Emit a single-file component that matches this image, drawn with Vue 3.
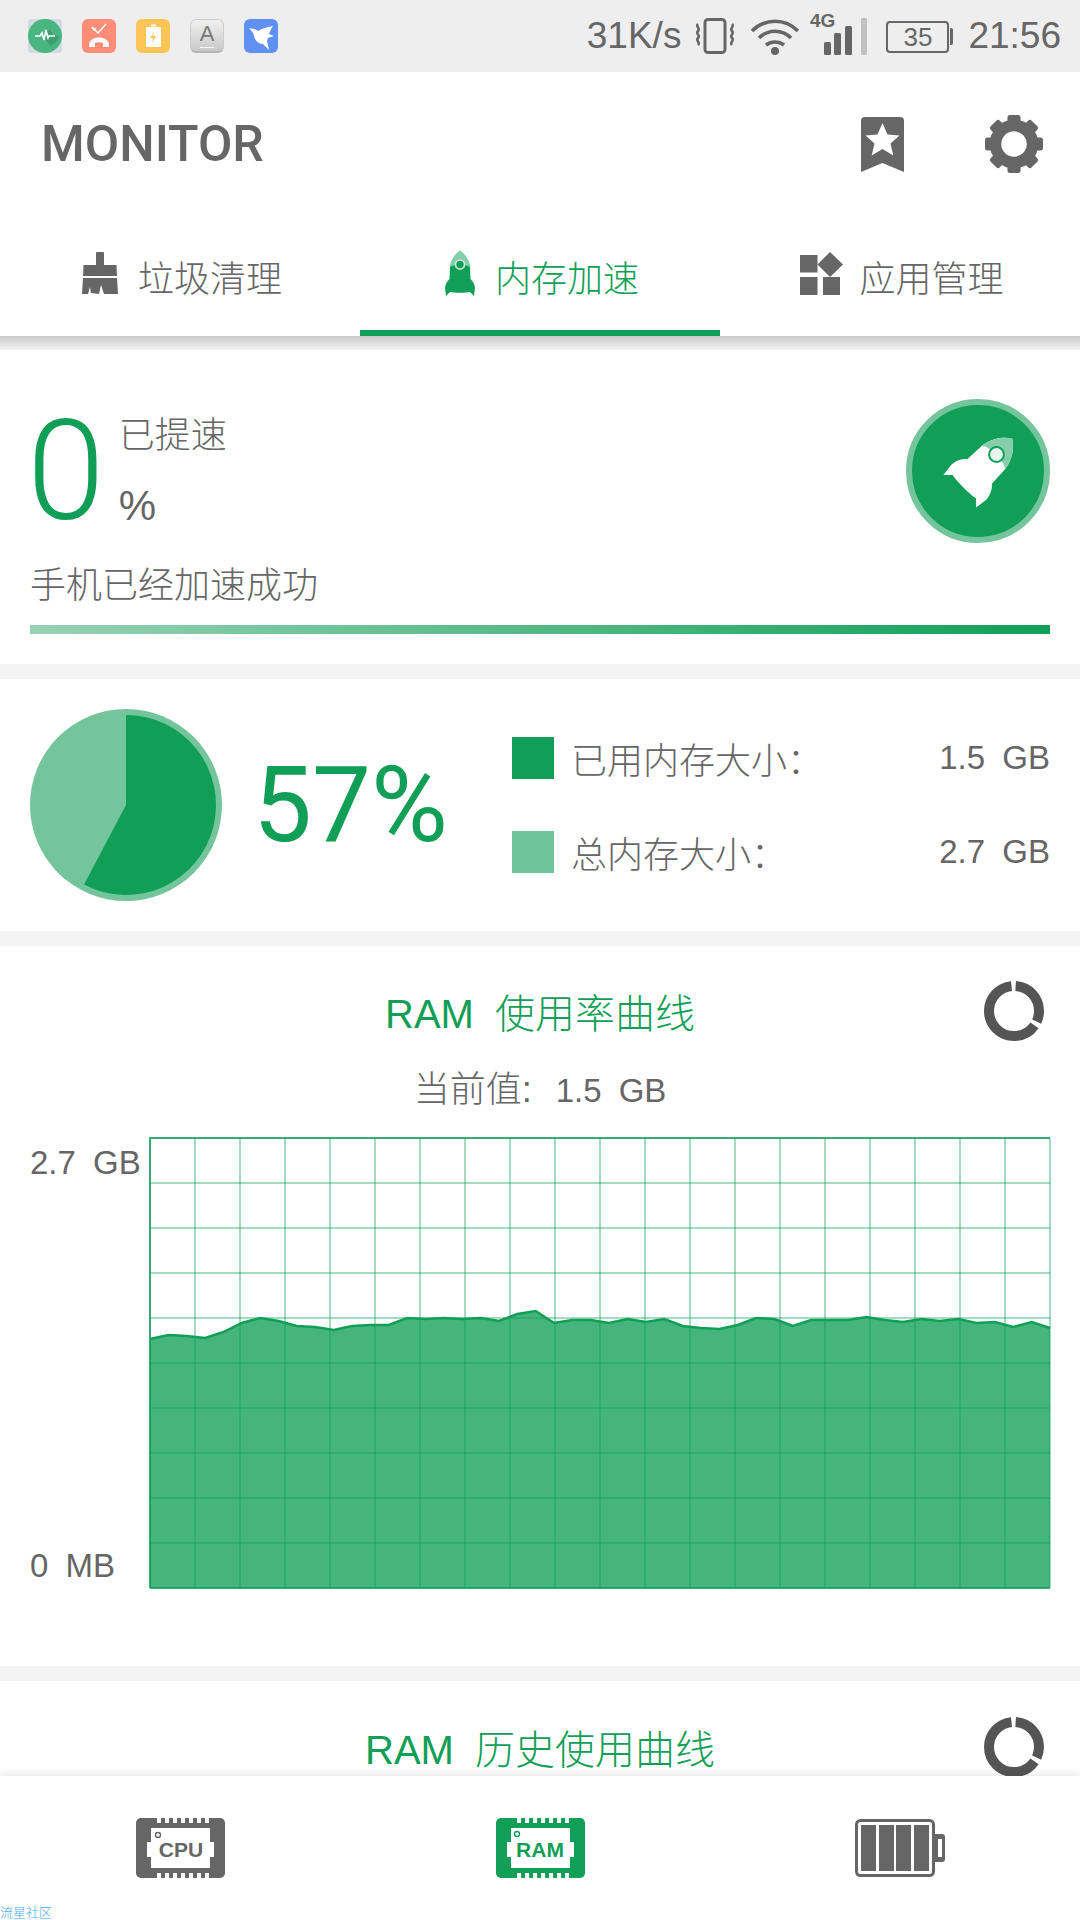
<script setup>
// Curva de uso de RAM: valores y (px dentro de la gráfica), uno cada 18.37 px
const ramCurve = [
  202, 198, 199, 201, 195, 186, 181, 184, 189, 190, 193, 189, 188, 188, 181, 182, 181,
  182, 181, 184, 177, 174, 186, 183, 183, 186, 182, 185, 182, 189, 191, 192, 188, 181,
  182, 189, 183, 183, 183, 180, 183, 185, 182, 184, 182, 186, 185, 190, 185, 191,
]

const linePoints = ramCurve.map((y, i) => `${(1 + (i * 900) / 49).toFixed(1)},${y}`).join(' ')
const areaPoints = `1,451 ${linePoints} 901,451`

const gridX = Array.from({ length: 21 }, (_, i) => 1 + i * 45)
const gridY = Array.from({ length: 11 }, (_, i) => 1 + i * 45)

const gearTeeth = [0, 45, 90, 135, 180, 225, 270, 315]
const chipPins = [0, 1, 2, 3, 4, 5, 6]
const batteryCells = [6, 24, 41, 59]

// Cohete compartido por la pestaña y el botón
const rocketBody =
  'M15 0C20 3 24 9 25 16L25.5 28C28 30 29.5 33 30 37L29 45L25 41C22 42 8 42 5 41L1 45L0 37C.5 33 2 30 4.5 28L5 16C6 9 10 3 15 0Z'
const rocketNose = 'M15 0C20 3 24 9 25 16C20 12.5 10 12.5 5 16C6 9 10 3 15 0Z'

const tabs = [
  { key: 'clean', label: '垃圾清理' },
  { key: 'boost', label: '内存加速', active: true },
  { key: 'apps', label: '应用管理' },
]
</script>

<template>
  <div class="screen">
    <!-- Barra de estado -->
    <div class="status-bar">
      <div class="notifications">
        <svg class="notif" viewBox="0 0 34 34">
          <rect width="34" height="34" rx="4" fill="#d5dae0" />
          <circle cx="17" cy="17" r="17" fill="#49b581" />
          <path d="M14 17l9 10 6-5 2-5-6-1-3-6z" fill="#3f9e70" />
          <path d="M7 17h5l2-3 2 7 2-10 2 8 1-2h6" fill="none" stroke="#fff" stroke-width="1.6" />
        </svg>
        <svg class="notif" viewBox="0 0 34 34">
          <rect width="34" height="34" rx="6" fill="#fe8d78" />
          <path d="M10 8l2 3 2-2M10 8l6 6 8-9" fill="none" stroke="#fff" stroke-width="1.4" />
          <path d="M7 26c0-10 20-10 20 0v2h-6v-4c-2-1-6-1-8 0v4H7z" fill="#fff" />
        </svg>
        <svg class="notif" viewBox="0 0 34 34">
          <rect width="34" height="34" rx="6" fill="#fdc557" />
          <rect x="10" y="8" width="15" height="20" rx="1" fill="#fff" />
          <rect x="15" y="5.5" width="5" height="2" fill="#fff" />
          <path d="M18 13l-4 6h3l-1 5 4-7h-3z" fill="#fdc557" />
        </svg>
        <div class="notif notif-keyboard"><span>A</span></div>
        <svg class="notif" viewBox="0 0 34 34">
          <rect width="34" height="34" rx="6" fill="#5e91f2" />
          <path d="M5 9c4 1 7 1 9 3 3-2 8-4 15-5-2 3-3 5-4 8l5 2-6 2-1 3 2 9-6-6c-4 0-8-3-9-8 0-3-3-5-5-8z" fill="#fff" />
        </svg>
      </div>
      <div class="indicators">
        <span class="speed">31K/s</span>
        <svg class="ic-vibrate" width="40" height="36" viewBox="0 0 40 36">
          <rect x="10" y="1.5" width="20" height="33" rx="3" fill="none" stroke="#666" stroke-width="3" />
          <path d="M3 6c-3 3 3 4 0 7s3 4 0 7 3 4 0 7M37 6c3 3-3 4 0 7s-3 4 0 7-3 4 0 7" fill="none" stroke="#666" stroke-width="2.6" />
        </svg>
        <svg class="ic-wifi" width="50" height="37" viewBox="0 0 50 37">
          <path d="M2 13C15 0 35 0 48 13M9 20C18 11 32 11 41 20M16 27c5-4 13-4 18 0" fill="none" stroke="#666" stroke-width="3.6" />
          <circle cx="25" cy="33" r="4" fill="#666" />
        </svg>
        <svg class="ic-signal" width="58" height="42" viewBox="0 0 58 42">
          <text x="0" y="14" class="net-label">4G</text>
          <rect x="14" y="29" width="7" height="13" rx="1.5" fill="#666" />
          <rect x="24" y="20" width="7" height="22" rx="1.5" fill="#666" />
          <rect x="39" y="13" width="0" height="0" />
          <rect x="35" y="13" width="7" height="29" rx="1.5" fill="#666" />
          <rect x="51" y="5" width="6" height="37" rx="1.5" fill="#c2c2c2" />
        </svg>
        <div class="battery"><span>35</span></div>
        <span class="clock">21:56</span>
      </div>
    </div>

    <!-- Cabecera -->
    <header class="app-header">
      <div class="logo">MONITOR</div>
      <div class="header-actions">
        <svg width="43" height="55" viewBox="0 0 43 55">
          <path d="M4 0h35a4 4 0 0 1 4 4v51L21.500 46 0 55V4a4 4 0 0 1 4-4z" fill="#666" />
          <path d="M21.500 6l5 11.500 12 1-9 8 2.800 12-10.800-6.500-10.800 6.500 2.800-12-9-8 12-1z" fill="#fff" />
        </svg>
        <svg width="58" height="58" viewBox="0 0 58 58">
          <g fill="#666">
            <rect v-for="a in gearTeeth" :key="a" x="22.500" y="0" width="13" height="14" rx="2.500" :transform="`rotate(${a} 29 29)`" />
          </g>
          <circle cx="29" cy="29" r="18.500" fill="none" stroke="#666" stroke-width="11.500" />
        </svg>
      </div>
    </header>

    <!-- Pestañas -->
    <nav class="tabs">
      <div v-for="tab in tabs" :key="tab.key" class="tab" :class="[tab.key, { active: tab.active }]">
        <svg v-if="tab.key === 'clean'" width="36" height="42" viewBox="0 0 36 42">
          <path d="M14 2a4 4 0 0 1 8 0v11h12.500l.5 11H1l.5-11H14z" fill="#666" />
          <path d="M1 26h34l1 16H22l-3-9-2 9-8-1-1-6-2 7H0z" fill="#666" />
        </svg>
        <svg v-else-if="tab.key === 'boost'" width="30" height="45" viewBox="0 0 30 45">
          <path :d="rocketBody" fill="#119f58" />
          <path :d="rocketNose" fill="#86ceaa" />
          <circle cx="15" cy="13.500" r="4.500" fill="#119f58" stroke="#d2ecdf" stroke-width="1.600" />
        </svg>
        <svg v-else width="43" height="43" viewBox="0 0 43 43">
          <g fill="#666">
            <rect x="0" y="3" width="17.500" height="17.500" />
            <path d="M30 0l13 12.500L30 25 17.500 12.500z" />
            <rect x="0" y="25" width="17.500" height="18" />
            <rect x="23" y="25" width="17" height="18" />
          </g>
        </svg>
        <span>{{ tab.label }}</span>
      </div>
    </nav>

    <main class="content">
      <div class="tabs-shadow"></div>

      <!-- Aceleración -->
      <section class="card boost-card">
        <div class="boost-top">
          <div class="boost-value">
            <span class="boost-number">0</span>
            <div class="boost-side">
              <span>已提速</span>
              <span class="boost-percent">%</span>
            </div>
          </div>
          <svg class="boost-button" width="144" height="144" viewBox="0 0 144 144">
            <circle cx="72" cy="72" r="69" fill="#119f58" stroke="#74c49c" stroke-width="6" />
            <g transform="translate(80 66) rotate(45) scale(1.650) translate(-15 -22.500)">
              <path :d="rocketBody" fill="#fff" />
              <path :d="rocketNose" fill="#86ceaa" />
              <circle cx="15" cy="13.500" r="4.500" fill="#e6f5ed" stroke="#119f58" stroke-width="1.200" />
            </g>
          </svg>
        </div>
        <p class="boost-text">手机已经加速成功</p>
        <div class="boost-bar"></div>
      </section>

      <!-- Resumen de memoria -->
      <section class="card memory-card">
        <svg class="pie" width="192" height="192" viewBox="0 0 192 192">
          <circle cx="96" cy="96" r="96" fill="#74c49c" />
          <path d="M96 96V6A90 90 0 1 1 54 175.600Z" fill="#119f58" />
        </svg>
        <div class="memory-percent">57%</div>
        <div class="legend">
          <div class="legend-row">
            <i class="swatch used"></i>
            <span>已用内存大小：</span>
            <span class="num">1.5 GB</span>
          </div>
          <div class="legend-row">
            <i class="swatch total"></i>
            <span>总内存大小：</span>
            <span class="num">2.7 GB</span>
          </div>
        </div>
      </section>

      <!-- Curva de uso -->
      <section class="card chart-card">
        <div class="chart-title">
          <h2>RAM 使用率曲线</h2>
          <svg class="loader" width="60" height="60" viewBox="0 0 60 60">
            <circle cx="30" cy="30" r="25" fill="none" stroke="#555" stroke-width="10" pathLength="360" stroke-dasharray="111 10 229 10" stroke-dashoffset="-4" transform="rotate(-90 30 30)" />
          </svg>
        </div>
        <p class="current">当前值:<span class="num">1.5 GB</span></p>
        <div class="chart">
          <div class="axis">
            <span class="num">2.7 GB</span>
            <span class="num">0 MB</span>
          </div>
          <svg width="902" height="452" viewBox="0 0 902 452">
            <polygon :points="areaPoints" fill="#119f58" fill-opacity="0.78" />
            <line v-for="x in gridX" :key="'x' + x" :x1="x" :x2="x" y1="1" y2="451" class="grid" />
            <line v-for="y in gridY" :key="'y' + y" x1="1" x2="901" :y1="y" :y2="y" class="grid" />
            <path d="M1 451V1H901" fill="none" stroke="#119f58" stroke-width="1.500" />
            <path d="M1 451H901" fill="none" stroke="#119f58" stroke-width="1.500" />
            <polyline :points="linePoints" fill="none" stroke="#119f58" stroke-width="2.500" />
          </svg>
        </div>
      </section>

      <section class="card history-card">
        <div class="chart-title">
          <h2>RAM 历史使用曲线</h2>
          <svg class="loader" width="60" height="60" viewBox="0 0 60 60">
            <circle cx="30" cy="30" r="25" fill="none" stroke="#555" stroke-width="10" pathLength="360" stroke-dasharray="111 10 229 10" stroke-dashoffset="-4" transform="rotate(-90 30 30)" />
          </svg>
        </div>
      </section>
    </main>

    <!-- Navegación inferior -->
    <footer class="bottom-nav">
      <div class="nav-item">
        <svg width="89" height="60" viewBox="0 0 89 60">
          <rect width="89" height="60" rx="5" fill="#666" />
          <rect v-for="p in chipPins" :key="'t' + p" :x="21 + p * 8" y="0" width="4" height="5" fill="#fff" />
          <rect v-for="p in chipPins" :key="'b' + p" :x="21 + p * 8" y="55" width="4" height="5" fill="#fff" />
          <path d="M15 10h59v14h4v15h-4v11H15V39h-4V24h4z" fill="#fff" />
          <circle cx="22" cy="17" r="2.500" fill="none" stroke="#666" stroke-width="1.400" />
          <text x="45" y="39" class="chip-label" fill="#666">CPU</text>
        </svg>
      </div>
      <div class="nav-item">
        <svg width="89" height="60" viewBox="0 0 89 60">
          <rect width="89" height="60" rx="5" fill="#119f58" />
          <rect v-for="p in chipPins" :key="'t' + p" :x="21 + p * 8" y="0" width="4" height="5" fill="#fff" />
          <rect v-for="p in chipPins" :key="'b' + p" :x="21 + p * 8" y="55" width="4" height="5" fill="#fff" />
          <path d="M15 10h59v14h4v15h-4v11H15V39h-4V24h4z" fill="#fff" />
          <circle cx="21" cy="16" r="2.500" fill="none" stroke="#119f58" stroke-width="1.400" />
          <text x="44" y="39" class="chip-label" fill="#119f58">RAM</text>
        </svg>
      </div>
      <div class="nav-item">
        <svg width="90" height="58" viewBox="0 0 90 58">
          <path d="M80 15h7a3 3 0 0 1 3 3v22a3 3 0 0 1-3 3h-7z" fill="#666" />
          <rect x="83" y="20" width="4" height="18" fill="#fff" />
          <rect x="1.500" y="1.500" width="77" height="55" rx="4" fill="#fff" stroke="#666" stroke-width="3" />
          <rect v-for="x in batteryCells" :key="x" :x="x" y="6" width="15" height="46" fill="#666" />
        </svg>
      </div>
      <span class="watermark">流星社区</span>
    </footer>
  </div>
</template>

<style scoped>
/* Contenedor principal */
.screen {
  position: relative;
  display: flex;
  flex-direction: column;
  width: 1080px;
  height: 1920px;
  overflow: hidden;
  background: #fff;
  color: #666;
  font-family: "Liberation Sans", "Noto Sans CJK SC", sans-serif;
  font-size: 36px;
  font-weight: 300;
}

/* Barra de estado */
.status-bar {
  display: flex;
  align-items: center;
  justify-content: space-between;
  flex: none;
  height: 72px;
  padding: 0 19px 0 28px;
  background: #eee;
}

.notifications {
  display: flex;
  gap: 20px;
}

.notif {
  width: 34px;
  height: 34px;
}

.notif-keyboard {
  display: flex;
  align-items: center;
  justify-content: center;
  box-sizing: border-box;
  border: 1px solid #ccc;
  border-bottom: 2px solid #b5b5b5;
  border-radius: 6px;
  background: linear-gradient(#f0f0f0, #c9c9c9);
  color: #777;
  font-size: 22px;
  line-height: 1;
}

.notif-keyboard span {
  border-bottom: 1px solid #f5f5f5;
  padding-bottom: 2px;
}

.indicators {
  display: flex;
  align-items: center;
}

.speed,
.clock {
  font-size: 37px;
  line-height: 40px;
}

.ic-vibrate {
  margin-left: 14px;
}

.ic-wifi {
  margin-left: 15px;
}

.ic-signal {
  margin: -5px 0 0 10px;
}

.net-label {
  font: bold 19px "Liberation Sans", sans-serif;
  fill: #666;
}

.battery {
  position: relative;
  display: flex;
  align-items: center;
  justify-content: center;
  box-sizing: border-box;
  width: 63px;
  height: 32px;
  margin: 2px 19px 0 18px;
  border: 2.500px solid #666;
  border-radius: 4px;
  font-size: 26px;
  line-height: 1;
}

.battery::after {
  content: "";
  position: absolute;
  top: 5px;
  right: -6px;
  width: 3px;
  height: 17px;
  border-radius: 0 2px 2px 0;
  background: #666;
}

/* Cabecera */
.app-header {
  display: flex;
  align-items: center;
  justify-content: space-between;
  flex: none;
  height: 144px;
  padding: 0 37px 0 41px;
}

.logo {
  font-family: Roboto, sans-serif;
  font-size: 50px;
  font-weight: 500;
  color: #666;
}

.header-actions {
  display: flex;
  align-items: center;
  gap: 81px;
}

/* Pestañas */
.tabs {
  display: flex;
  flex: none;
  height: 120px;
}

.tab {
  display: flex;
  align-items: center;
  justify-content: center;
  gap: 20px;
  width: 360px;
  padding-left: 4px;
  box-sizing: border-box;
  border-bottom: 6px solid transparent;
}

.tab.apps {
  gap: 16px;
}

.tab span {
  padding-top: 6px;
}

.tab.active {
  border-bottom-color: #119f58;
  color: #119f58;
}

/* Área de contenido */
.content {
  flex: 1;
  min-height: 0;
  overflow: hidden;
  background: #f4f4f4;
}

.tabs-shadow {
  height: 14px;
  background: linear-gradient(#c9c9c9, #f4f4f4);
}

.card {
  background: #fff;
}

.card + .card {
  margin-top: 15px;
}

.boost-card {
  padding: 49px 30px 30px;
}

.boost-top {
  display: flex;
  align-items: center;
  justify-content: space-between;
  height: 144px;
}

.boost-value {
  display: flex;
  align-items: center;
}

.boost-number {
  margin-left: -3px;
  color: #119f58;
  font-family: Roboto, sans-serif;
  font-size: 140px;
  font-weight: 300;
  line-height: 144px;
}

.boost-side {
  display: flex;
  flex-direction: column;
  gap: 30px;
  margin-left: 14px;
  line-height: 40px;
}

.boost-percent {
  font-size: 42px;
}

.boost-text {
  margin: 25px 0 0;
  line-height: 36px;
}

.boost-bar {
  height: 9px;
  margin-top: 21px;
  background: linear-gradient(90deg, #97d2b3, #119f58);
}

.memory-card {
  display: flex;
  align-items: center;
  height: 252px;
  padding: 0 30px;
  box-sizing: border-box;
}

.memory-percent {
  margin-left: 31px;
  color: #119f58;
  font-family: Roboto, sans-serif;
  font-size: 105px;
  font-weight: 400;
}

.legend {
  display: flex;
  flex-direction: column;
  gap: 52px;
  width: 538px;
  margin-left: auto;
}

.legend-row {
  display: flex;
  align-items: center;
  height: 42px;
}

.swatch {
  width: 42px;
  height: 42px;
  margin-right: 17px;
}

.swatch.used {
  background: #119f58;
}

.swatch.total {
  background: #6fc49a;
}

.legend-row .num {
  margin-left: auto;
}

.num {
  font-size: 33px;
  word-spacing: 8px;
}

/* Tarjetas con gráfica */
.chart-card {
  padding: 35px 0 77px;
}

.history-card {
  padding-top: 36px;
  height: 200px;
}

.chart-title {
  display: grid;
  grid-template-columns: 1fr auto 1fr;
  align-items: center;
  height: 60px;
  padding-right: 36px;
  padding-left: 36px;
}

.chart-title h2 {
  grid-column: 2;
  margin: 0;
  color: #119f58;
  font-size: 40px;
  font-weight: 300;
  word-spacing: 10px;
}

.loader {
  grid-column: 3;
  justify-self: end;
}

.current {
  margin: 31px 0 0;
  line-height: 36px;
  text-align: center;
}

.current .num {
  margin-left: 24px;
}

.chart {
  display: flex;
  margin-top: 28px;
}

.axis {
  display: flex;
  flex-direction: column;
  justify-content: space-between;
  box-sizing: border-box;
  width: 149px;
  padding: 8px 0 5px 30px;
  line-height: 36px;
}

.grid {
  stroke: #119f58;
  stroke-opacity: 0.5;
  stroke-width: 1.500;
}

/* Navegación inferior */
.bottom-nav {
  position: relative;
  display: flex;
  flex: none;
  height: 144px;
  background: #fff;
  box-shadow: 0 -2px 8px rgba(0, 0, 0, 0.1);
}

.nav-item {
  display: flex;
  align-items: center;
  justify-content: center;
  width: 360px;
}

.chip-label {
  font: bold 21px "Liberation Sans", sans-serif;
  text-anchor: middle;
}

.watermark {
  position: absolute;
  left: 0;
  bottom: 0;
  color: #45a9f7;
  font-size: 13px;
  line-height: 14px;
}
</style>

<style>
body {
  background: #fff;
}
</style>
